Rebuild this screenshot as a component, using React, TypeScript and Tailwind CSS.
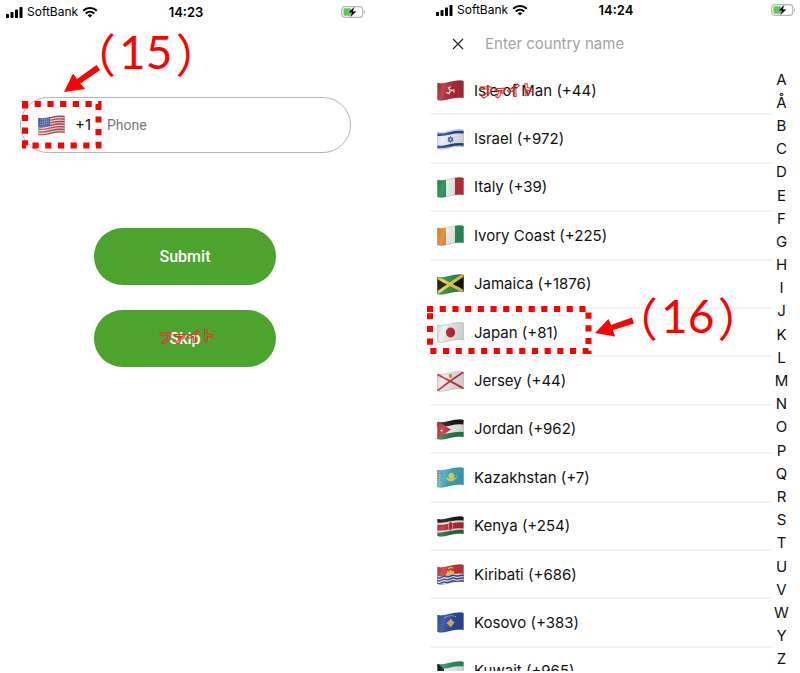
import { useId, useState } from 'react'
import type { ReactNode } from 'react'

interface Country {
  name: string
  code: string
  flag: ReactNode
}

// A horizontal curve that follows the ripple of the flag cloth
const ripple = (y: number) => `M0 ${y + 2} C8 ${y + 4} 16 ${y - 2} 27 ${y}`

function Stripe({ y, width, color }: { y: number; width: number; color: string }) {
  return <path d={ripple(y)} stroke={color} strokeWidth={width} fill="none" />
}

function Flag({ children }: { children: ReactNode }) {
  const id = useId()
  return (
    <svg viewBox="0 0 27 21" className="h-[21px] w-[27px] shrink-0" aria-hidden="true">
      <defs>
        <clipPath id={`${id}c`}>
          <path d="M0.5 3 C8 5 16 -1 26.5 1 V18 C16 16 8 22 0.5 20 Z" />
        </clipPath>
        <linearGradient id={`${id}g`} x1="0" x2="1" y1="0" y2="0.2">
          <stop offset="0" stopColor="#000" stopOpacity="0.12" />
          <stop offset="0.3" stopColor="#fff" stopOpacity="0.12" />
          <stop offset="0.65" stopColor="#000" stopOpacity="0.08" />
          <stop offset="1" stopColor="#000" stopOpacity="0.14" />
        </linearGradient>
      </defs>
      <g clipPath={`url(#${id}c)`}>
        {children}
        <rect width="27" height="21" fill={`url(#${id}g)`} />
      </g>
      <path
        d="M0.5 3 C8 5 16 -1 26.5 1 V18 C16 16 8 22 0.5 20 Z"
        fill="none"
        stroke="#000"
        strokeOpacity="0.25"
        strokeWidth="0.6"
      />
    </svg>
  )
}

const bg = (color: string) => <rect width="27" height="21" fill={color} />

const usFlag = (
  <>
    {bg('#f0eeee')}
    {[1.6, 4.2, 6.8, 9.4, 12, 14.6, 17.2].map((y) => (
      <Stripe key={y} y={y} width={1.4} color="#c4474c" />
    ))}
    <path d="M0 2 C5 4.500 9 2.500 12 1.500 V10.500 C9 11.500 5 13 0 12.500 Z" fill="#3f63a8" />
    {[5, 7.4, 9.8].map((y) => (
      <path key={y} d={`M2 ${y} L11 ${y - 1.5}`} stroke="#c9d5ec" strokeWidth="0.8" strokeDasharray="0.8 1.2" />
    ))}
  </>
)

const countries: Country[] = [
  {
    name: 'Isle of Man',
    code: '+44',
    flag: (
      <>
        {bg('#b32b3a')}
        <path
          d="M13.500 10.500 L11.500 8 L13.800 6.500 M13.500 10.500 L16.800 10 L17 12.800 M13.500 10.500 L12 13.500 L9.500 12.500"
          fill="none"
          stroke="#f0dcdc"
          strokeWidth="1.4"
        />
      </>
    ),
  },
  {
    name: 'Israel',
    code: '+972',
    flag: (
      <>
        {bg('#eeeff2')}
        <Stripe y={3.4} width={2.6} color="#2348a0" />
        <Stripe y={15.6} width={2.6} color="#2348a0" />
        <path d="M13.500 7.500 L16 12 H11 Z M13.500 13.500 L11 9 H16 Z" fill="none" stroke="#2348a0" strokeWidth="0.8" />
      </>
    ),
  },
  {
    name: 'Italy',
    code: '+39',
    flag: (
      <>
        {bg('#f2f2f2')}
        <rect width="9" height="21" fill="#1f8a4c" />
        <rect x="18" width="9" height="21" fill="#c2313c" />
      </>
    ),
  },
  {
    name: 'Ivory Coast',
    code: '+225',
    flag: (
      <>
        {bg('#f4f4f2')}
        <rect width="9" height="21" fill="#e8842c" />
        <rect x="18" width="9" height="21" fill="#25965c" />
      </>
    ),
  },
  {
    name: 'Jamaica',
    code: '+1876',
    flag: (
      <>
        {bg('#2f9150')}
        <path d="M0 2 L12 11 L0 20 Z M27 1 L15 10 L27 18 Z" fill="#141414" />
        <path d="M0 3 C8 9 18 12 27 18 M0 19 C8 14 18 6 27 1" fill="none" stroke="#ecd13a" strokeWidth="3" />
      </>
    ),
  },
  {
    name: 'Japan',
    code: '+81',
    flag: (
      <>
        {bg('#eeeeee')}
        <ellipse cx="13.500" cy="10.500" rx="4.600" ry="5" fill="#bf2433" />
      </>
    ),
  },
  {
    name: 'Jersey',
    code: '+44',
    flag: (
      <>
        {bg('#ececec')}
        <path d="M0 3 C8 8 18 12 27 18 M0 20 C8 14 18 6 27 1" fill="none" stroke="#c92f3a" strokeWidth="1.8" />
        <path d="M12 3 H15 V6 L13.500 7.500 L12 6 Z" fill="#d9913a" />
      </>
    ),
  },
  {
    name: 'Jordan',
    code: '+962',
    flag: (
      <>
        {bg('#f1f1f1')}
        <Stripe y={2.6} width={6} color="#1a1a1a" />
        <Stripe y={16} width={6} color="#1f8448" />
        <path d="M0 2 L14 10.500 L0 20 Z" fill="#c9303b" />
        <circle cx="4.500" cy="11.500" r="1" fill="#fff" />
      </>
    ),
  },
  {
    name: 'Kazakhstan',
    code: '+7',
    flag: (
      <>
        {bg('#3fa9c6')}
        <path d="M2.500 2 V20" stroke="#d2c450" strokeWidth="2" strokeDasharray="1.5 1" />
        <circle cx="14.500" cy="9" r="3" fill="#ecd84a" />
        <path d="M9 10.500 C11 15 17 15.500 20 9.500 C18 13 12 13 9 10.500" fill="#ecd84a" stroke="#ecd84a" strokeWidth="0.8" />
      </>
    ),
  },
  {
    name: 'Kenya',
    code: '+254',
    flag: (
      <>
        {bg('#f0eaea')}
        <Stripe y={2} width={5} color="#1a1a1a" />
        <Stripe y={9.5} width={6} color="#b92b36" />
        <Stripe y={16.6} width={5} color="#27703b" />
        <path d="M12 5 L15 15 M15 5 L12 15" stroke="#f1e6e6" strokeWidth="0.8" />
        <ellipse cx="13.500" cy="10" rx="2" ry="4.600" fill="#a81f2c" stroke="#f1e6e6" strokeWidth="0.6" />
      </>
    ),
  },
  {
    name: 'Kiribati',
    code: '+686',
    flag: (
      <>
        {bg('#d2333c')}
        <path d="M11 4.500 L13.500 3.500 L16.500 4" stroke="#efc93c" strokeWidth="1.2" fill="none" />
        <path d="M8 11 L10 9 L10 7 L12 7.500 L13.500 5.500 L15 7.500 L17 6.500 L17 9 L19 11 Z" fill="#f3cf3f" />
        <path d={`${ripple(10)} V21 H0 Z`} fill="#eef0f6" />
        {[11.4, 14.2, 17].map((y) => (
          <path
            key={y}
            d={`M0 ${y + 2} q2.200 1.500 4.500 0 t4.500 -0.800 t4.500 -0.600 t4.500 -0.400 t4.500 0 t4.500 0`}
            fill="none"
            stroke="#294a9c"
            strokeWidth="1.5"
          />
        ))}
      </>
    ),
  },
  {
    name: 'Kosovo',
    code: '+383',
    flag: (
      <>
        {bg('#2e4d9e')}
        <path d="M13.500 6.500 L17.500 10.500 L15.500 13 L14 15.500 L12 13.500 L9.500 11 L11.500 9.500 Z" fill="#d8b35a" />
        <path d="M7.500 6 Q13.500 2 19.500 5" fill="none" stroke="#e6e9f4" strokeWidth="1" strokeDasharray="1 1.2" />
      </>
    ),
  },
  {
    name: 'Kuwait',
    code: '+965',
    flag: (
      <>
        {bg('#f1f1f1')}
        <Stripe y={2.6} width={6} color="#2b9160" />
        <Stripe y={16} width={6} color="#c9303b" />
        <path d="M0 2 L7 8 V14 L0 20 Z" fill="#151515" />
      </>
    ),
  },
]

const letters = [
  'A', 'Å', 'B', 'C', 'D', 'E', 'F', 'G', 'H', 'I', 'J', 'K', 'L',
  'M', 'N', 'O', 'P', 'Q', 'R', 'S', 'T', 'U', 'V', 'W', 'Y', 'Z',
]

function StatusBar({ time }: { time: string }) {
  return (
    <div className="grid h-5 grid-cols-[1fr_auto_1fr] items-center pr-1 pl-1.5 text-black">
      <div className="flex items-center gap-1">
        <svg viewBox="0 0 17 11" className="h-[11px] w-[17px]" aria-hidden="true">
          <rect x="0" y="7" width="3" height="4" rx="0.8" />
          <rect x="4.500" y="5" width="3" height="6" rx="0.8" />
          <rect x="9" y="2.500" width="3" height="8.500" rx="0.8" />
          <rect x="13.500" y="0" width="3" height="11" rx="0.8" />
        </svg>
        <span className="text-[12px] leading-4">SoftBank</span>
        <svg viewBox="0 0 16 12" className="h-3 w-4" aria-hidden="true">
          <g fill="none" stroke="#000" strokeWidth="2.100">
            <path d="M1.200 4.700 C5 1 11 1 14.800 4.700" />
            <path d="M3.800 7.400 C6.200 5.100 9.800 5.100 12.200 7.400" />
          </g>
          <path d="M5.700 9.200 C7 8 9 8 10.300 9.200 L8 11.600 Z" />
        </svg>
      </div>
      <span className="text-[13px] leading-4 font-semibold">{time}</span>
      <svg viewBox="0 0 25 12" className="h-3 w-[25px] justify-self-end" aria-hidden="true">
        <rect x="0.700" y="0.700" width="21" height="10.600" rx="3" fill="#fff" stroke="#b5b5b5" strokeWidth="1.200" />
        <path d="M23 4 C24.600 4.600 24.600 7.400 23 8 Z" fill="#b5b5b5" />
        <rect x="2.500" y="2.300" width="7.500" height="7.400" rx="1.300" fill="#5ec75c" />
        <path d="M13.600 0.500 L7 6.800 H10.600 L9 11.600 L15.600 5.200 H12 Z" fill="#000" stroke="#fff" strokeWidth="0.300" />
      </svg>
    </div>
  )
}

function Watermark() {
  return (
    <span
      aria-hidden="true"
      className="pointer-events-none block -rotate-3 font-['Noto_Sans_CJK_JP',sans-serif] text-[14px] leading-6 font-black whitespace-nowrap text-transparent [-webkit-text-stroke:1px_#e8302a]"
    >
      ファイト
    </span>
  )
}

function Callout({ children }: { children: ReactNode }) {
  return (
    <span className="flex items-center leading-[48px] text-[#ff0000]">
      <span className="font-['Noto_Sans_CJK_JP',sans-serif] text-[46px]">（</span>
      <span className="px-[3px] font-[Lato,sans-serif] text-[46px]">{children}</span>
      <span className="font-['Noto_Sans_CJK_JP',sans-serif] text-[46px]">）</span>
    </span>
  )
}

export default function App() {
  const [phone, setPhone] = useState('')
  const [query, setQuery] = useState('')

  return (
    <div className="flex gap-[60px] overflow-hidden bg-white font-[Inter,sans-serif] text-[#111]">
      {/* Phone number screen */}
      <section className="relative min-w-0 flex-1 pt-0.5">
        <StatusBar time="14:23" />

        <form className="mt-[75px] flex flex-col items-center" onSubmit={(e) => e.preventDefault()}>
          <div className="flex h-14 w-full pr-[19px] pl-5">
            <div className="flex min-w-0 flex-1 items-center rounded-full border border-[#b5b5b5] pl-[17px]">
              <button type="button" className="flex items-center gap-2.5 text-[15px] leading-5">
                <Flag>{usFlag}</Flag>
                <span>+1</span>
              </button>
              <input
                type="tel"
                aria-label="Phone"
                placeholder="Phone"
                value={phone}
                onChange={(e) => setPhone(e.target.value)}
                className="ml-4 min-w-0 flex-1 bg-transparent font-[Roboto,sans-serif] text-[14px] leading-5 outline-none placeholder:text-[#777]"
              />
            </div>
          </div>
          <button
            type="submit"
            className="mt-[75px] h-[57px] w-[182px] rounded-full bg-[#4ca42f] font-[Roboto,sans-serif] text-[16px] font-medium text-white"
          >
            Submit
          </button>
          <button
            type="button"
            className="relative mt-[25px] h-[57px] w-[182px] rounded-full bg-[#4ca42f] font-[Roboto,sans-serif] text-[16px] font-medium text-white"
          >
            Skip
            <span className="absolute top-3.5 left-[65px]">
              <Watermark />
            </span>
          </button>
        </form>

        {/* Step 15 marker */}
        <svg viewBox="0 0 110 160" className="pointer-events-none absolute top-0 left-0 h-[160px] w-[110px]" aria-hidden="true">
          <path
            d="M22 104 H98.500 V145.500 H25 V104"
            fill="none"
            stroke="#ff0000"
            strokeWidth="6"
            strokeDasharray="6.200 6.500"
          />
          <path d="M64 92 L73 73.500 L77 79 L96.500 65 L100 70 L80.500 83.500 L85 89 Z" fill="#ff0000" />
        </svg>
        <div className="pointer-events-none absolute top-[28px] left-[70px]">
          <Callout>15</Callout>
        </div>
      </section>

      {/* Country picker screen */}
      <section className="relative min-w-0 flex-1">
        <StatusBar time="14:24" />

        <div className="mt-3 flex h-6 items-center pl-5">
          <button type="button" aria-label="Close" className="flex h-4 w-4 items-center justify-center">
            <svg viewBox="0 0 12 12" className="h-3 w-3" aria-hidden="true">
              <path d="M1 1 L11 11 M11 1 L1 11" stroke="#222" strokeWidth="1.200" />
            </svg>
          </button>
          <input
            type="text"
            aria-label="Enter country name"
            placeholder="Enter country name"
            value={query}
            onChange={(e) => setQuery(e.target.value)}
            className="ml-[19px] min-w-0 flex-1 bg-transparent text-[15px] leading-5 outline-none placeholder:text-[#a3a3a3]"
          />
        </div>

        <div className="mt-[11px] flex h-[604px]">
          <div className="min-w-0 flex-1 overflow-hidden">
            <ul className="flex h-[629px] flex-col">
              {countries.map((country) => (
                <li key={country.name} className="flex flex-1 border-b-2 border-[#f4f4f4]">
                  <button type="button" className="flex w-full items-center gap-2.5 pt-px pl-[7px] text-left text-[15px] leading-5">
                    <Flag>{country.flag}</Flag>
                    <span>
                      {country.name} ({country.code})
                    </span>
                  </button>
                </li>
              ))}
            </ul>
          </div>
          <nav aria-label="Alphabet" className="flex w-[27px] flex-col pt-px pr-2.5 text-[15px] leading-5">
            {letters.map((letter) => (
              <a key={letter} href={`#${letter}`} className="flex min-h-0 flex-1 items-center justify-center">
                {letter}
              </a>
            ))}
          </nav>
        </div>

        <div className="pointer-events-none absolute top-[78px] left-[49px]">
          <Watermark />
        </div>

        {/* Step 16 marker */}
        <svg viewBox="425 290 215 70" className="pointer-events-none absolute top-[290px] -left-[5px] h-[70px] w-[215px]" aria-hidden="true">
          <path
            d="M427 309 H588.500 V351 H430 V309"
            fill="none"
            stroke="#ff0000"
            strokeWidth="6"
            strokeDasharray="6.100 6.600"
          />
          <path d="M595 333 L608.500 319 L611 325 L632 317.500 L634 323.500 L613 330 L615 336.500 Z" fill="#ff0000" />
        </svg>
        <div className="pointer-events-none absolute top-[292px] left-[182px]">
          <Callout>16</Callout>
        </div>
      </section>
    </div>
  )
}
